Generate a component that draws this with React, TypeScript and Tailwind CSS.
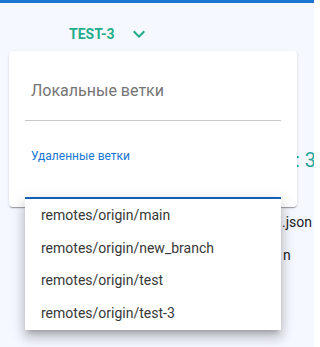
import React from "react";

const items = [
  "remotes/origin/main",
  "remotes/origin/new_branch",
  "remotes/origin/test",
  "remotes/origin/test-3",
];

export default function App() {
  return (
    <div className="relative w-[314px] h-[347px] overflow-hidden bg-[#f5f8fe] font-['Roboto',sans-serif]">
      <div className="h-[3px] bg-[#1976d2]" />
      <div className="mt-[19px] flex h-[24px] items-center pl-[69px]">
        <span className="text-[14px] font-bold leading-[20px] text-[#1fae8a]">TEST-3</span>
        <svg viewBox="0 0 24 24" className="ml-[12px] h-[24px] w-[24px] fill-[#1fae8a]">
          <path d="M16.59 8.59 12 13.17 7.41 8.59 6 10l6 6 6-6z" />
        </svg>
      </div>
      <div className="mt-[100px] flex flex-col whitespace-nowrap">
        <div className="pl-[295px] text-[20px] leading-[28px] text-[#26a69a]">: 3</div>
        <div className="mt-[38px] pl-[282px] text-[14px] leading-[20px] text-[#222]">.json</div>
        <div className="mt-[13px] pl-[283px] text-[14px] leading-[20px] text-[#1c1c2a]">n</div>
      </div>

      <div className="absolute left-[9px] top-[51px] h-[156px] w-[288px] rounded-[4px] bg-white px-[16px] pt-[28px] shadow-[0_2px_1px_-1px_rgba(0,0,0,0.2),0_1px_1px_0_rgba(0,0,0,0.14),0_1px_3px_0_rgba(0,0,0,0.12)]">
        <div className="pl-[6px] text-[16px] leading-[24px] text-[#757575]">Локальные ветки</div>
        <div className="mt-[17px] h-px bg-[#c8c8c8]" />
        <div className="mt-[27px] pl-[6px] text-[12px] leading-[16px] text-[#1976d2]">Удаленные ветки</div>
        <div className="mt-[33px] h-[2px] bg-[#1565c0]" />
      </div>

      <div className="absolute left-[25px] top-[199px] w-[256px] bg-white shadow-[0_5px_5px_-3px_rgba(0,0,0,0.2),0_8px_10px_1px_rgba(0,0,0,0.14),0_3px_14px_2px_rgba(0,0,0,0.12)]">
        {items.map((t) => (
          <div key={t} className="flex h-[32.75px] items-center px-[16px] text-[14px] text-[#383838]">
            {t}
          </div>
        ))}
      </div>
    </div>
  );
}
